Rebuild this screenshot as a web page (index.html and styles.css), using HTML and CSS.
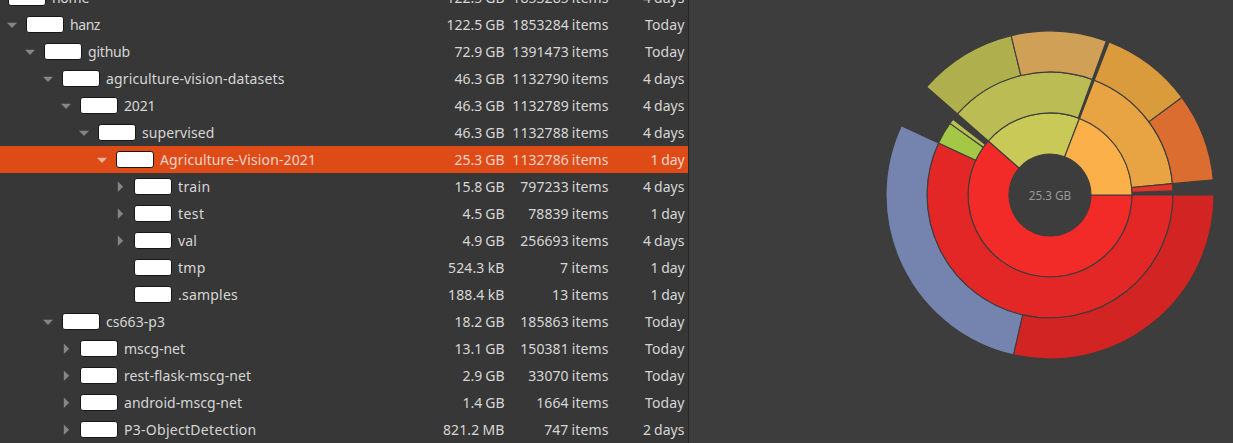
FILE: index.html
```
<!DOCTYPE html>
<html lang="en">
<head>
<meta charset="utf-8">
<title>Disk usage</title>
<link rel="stylesheet" href="styles.css">
</head>
<body>
<main class="window">
<section class="tree" id="tree"></section>
<section class="chart">
<svg class="rings" width="330" height="330" viewBox="-165 -165 330 330" id="rings"></svg>
</section>
</main>
<script src="app.js"></script>
</body>
</html>
```
FILE: styles.css
```
body { margin: 0; background: #3d3d3d; font-family: "Noto Sans", "Open Sans", sans-serif; font-size: 14px; color: #d6d6d6; }
.window { display: flex; width: 1233px; height: 443px; overflow: hidden; }
.tree { box-sizing: border-box; width: 689px; height: 443px; flex: none; background: #373737; border-right: 1px solid #282828; overflow: hidden; display: flex; flex-direction: column; justify-content: flex-end; }
.row { display: flex; align-items: center; height: 27px; flex: none; line-height: 27px; white-space: pre; padding-right: 3.5px; word-spacing: -0.6px; }
.selected { background: #df4b17; color: #f0d3c8; }
.expander { width: 26px; height: 27px; flex: none; }
.arrow { display: block; fill: #858585; }
.selected .arrow { fill: #eab39f; }
.usage { box-sizing: border-box; width: 38px; height: 17px; flex: none; background: #fff; border: 1px solid #171717; border-radius: 3px; }
.name { flex: 1; margin-left: 6px; }
.label { display: inline-block; }
.size, .items, .date { flex: none; text-align: right; }
.size { width: 84px; }
.items { width: 104px; }
.date { width: 76px; }
.chart { flex: 1; display: flex; padding: 30px 0 0 196px; }
.rings { display: block; flex: none; }
.wedge { stroke: #3d3d3d; stroke-width: 1.1; }
.total { fill: #999; font-size: 12.3px; text-anchor: middle; }
```
FILE: app.js
```
// level, expander, name, size, items, date, label width
const rows = [
  [0, "down", "home", "122.5 GB", "1853285 items", "4 days", 37],
  [1, "down", "hanz", "122.5 GB", "1853284 items", "Today", 30],
  [2, "down", "github", "72.9 GB", "1391473 items", "Today", 42],
  [3, "down", "agriculture-vision-datasets", "46.3 GB", "1132790 items", "4 days", 178.5],
  [4, "down", "2021", "46.3 GB", "1132789 items", "4 days", 31.5],
  [5, "down", "supervised", "46.3 GB", "1132788 items", "4 days", 72.5],
  [6, "down", "Agriculture-Vision-2021", "25.3 GB", "1132786 items", "1 day", 156],
  [7, "right", "train", "15.8 GB", "797233 items", "4 days", 32.5],
  [7, "right", "test", "4.5 GB", "78839 items", "1 day", 26.5],
  [7, "right", "val", "4.9 GB", "256693 items", "4 days", 19],
  [7, "", "tmp", "524.3 kB", "7 items", "1 day", 27.5],
  [7, "", ".samples", "188.4 kB", "13 items", "1 day", 60],
  [3, "down", "cs663-p3", "18.2 GB", "185863 items", "Today", 59],
  [4, "right", "mscg-net", "13.1 GB", "150381 items", "Today", 61],
  [4, "right", "rest-flask-mscg-net", "2.9 GB", "33070 items", "Today", 127],
  [4, "right", "android-mscg-net", "1.4 GB", "1664 items", "Today", 118],
  [4, "right", "P3-ObjectDetection", "821.2 MB", "747 items", "2 days", 132.5]
];
const arrows = {
  down: '<path d="M7 11.8H17L12 17Z"/>',
  right: '<path d="M9.8 8.5V19L15.2 13.7Z"/>',
  "": ""
};
const tree = document.getElementById("tree");
tree.innerHTML = rows.map(r => `<div class="row${r[0] === 6 ? " selected" : ""}">
<span class="expander" style="margin-left:${(r[0] - 1) * 18}px"><svg class="arrow" width="26" height="27">${arrows[r[1]]}</svg></span><span class="usage"></span><span class="name"><span class="label" data-width="${r[6]}">${r[2]}</span></span><span class="size"><span class="label" data-width="${sizeWidth(r[3])}">${r[3]}</span></span><span class="items"><span class="label" data-width="${r[4].indexOf(" ") * 7.95 + 40.5}">${r[4]}</span></span><span class="date"><span class="label" data-width="${{ Today: 39.5, "1 day": 34, "4 days": 41.5, "2 days": 41.5 }[r[5]]}">${r[5]}</span></span></div>`.replace(/\n/g, "")).join("");

function sizeWidth(s) {
  const unit = s.slice(-2);
  const digits = s.replace(/\D/g, "").length;
  return digits * 8 + 4 + { GB: 22, kB: 20.5, MB: 25.5 }[unit];
}

for (const label of document.querySelectorAll(".label")) {
  const n = label.textContent.length;
  const gap = (Number(label.dataset.width) - label.getBoundingClientRect().width) / n;
  label.style.letterSpacing = gap.toFixed(3) + "px";
}

// inner radius, start angle, end angle, colour
const wedges = [
  [41, 0, 221.2, "#f22a28"], [41, 221.2, 291, "#c9c958"], [41, 291, 360, "#fbb04a"],
  [82, 0, 205, "#e32726"], [82, 205, 215.6, "#a4c846"], [82, 215.6, 218, "#bcc052"],
  [82, 221.2, 290.1, "#bbbd54"], [82, 291.1, 354.7, "#e8a442"], [82, 354.7, 358.1, "#e33427"],
  [123, 0, 102.9, "#d22422"], [123, 102.9, 205, "#7584af"], [123, 221.2, 256.3, "#afaf4d"],
  [123, 256.3, 290.1, "#d1a057"], [123, 291.1, 323.5, "#da9b3d"], [123, 323.5, 354.7, "#da6d2f"]
];
const point = (r, a) => `${(r * Math.cos(a * Math.PI / 180)).toFixed(2)} ${(r * Math.sin(a * Math.PI / 180)).toFixed(2)}`;
document.getElementById("rings").innerHTML = wedges.map(([r, a, b, fill]) => {
  const large = b - a > 180 ? 1 : 0;
  const out = r + 41;
  return `<path class="wedge" fill="${fill}" d="M${point(r, a)}L${point(out, a)}A${out} ${out} 0 ${large} 1 ${point(out, b)}L${point(r, b)}A${r} ${r} 0 ${large} 0 ${point(r, a)}Z"/>`;
}).join("") + '<text class="total" x="0" y="5" textLength="42.5" lengthAdjust="spacingAndGlyphs">25.3 GB</text>';
```
